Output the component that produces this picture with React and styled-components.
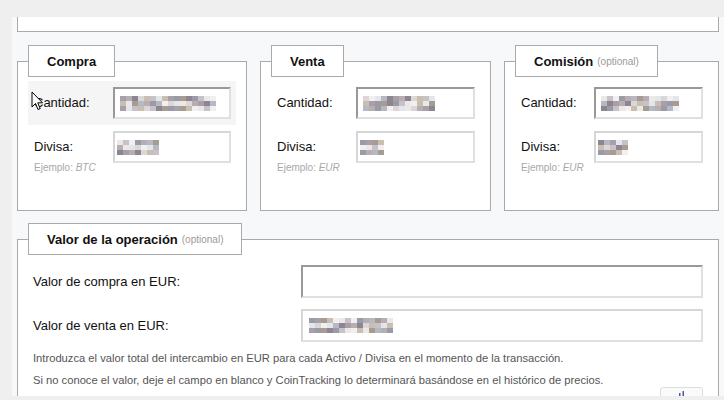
import styled, { createGlobalStyle } from 'styled-components'

const GlobalStyle = createGlobalStyle`
    body {
        margin: 0;
        background: #efefef;
        font-family: "Liberation Sans", Arial, sans-serif;
        color: #111;
    }
`

const Panel = styled.div`
    position: relative;
    margin: 17px 0 0 12px;
    height: 379px;
    overflow: hidden;
    background: #f7f8fa;
    padding: 0 5px;
`

const TopBox = styled.div`
    height: 14px;
    background: #fff;
    border: 1px solid #aaa;
    border-top: none;
`

const Columns = styled.div`
    display: grid;
    grid-template-columns: 230px 231px 1fr;
    column-gap: 13px;
    margin-top: 29px;
`

const Fieldset = styled.div`
    box-sizing: border-box;
    height: ${p => p.$height || 'auto'};
    background: #fff;
    border: 1px solid #aaa;
    border-bottom: ${p => (p.$open ? 'none' : '1px solid #aaa')};
    margin-top: ${p => p.$top || '0'};
`

const Legend = styled.div`
    box-sizing: border-box;
    display: flex;
    align-items: center;
    width: fit-content;
    height: 32px;
    margin: -17px 0 0 10px;
    padding: 0 18px;
    background: #fff;
    border: 1px solid #aaa;
    font-size: 13px;
    font-weight: bold;
    white-space: nowrap;
`

const Optional = styled.span`
    margin-left: 4px;
    font-size: 10px;
    font-weight: normal;
    color: #9a9a9a;
`

const Row = styled.div`
    display: grid;
    grid-template-columns: 40% 1fr;
    margin: ${p => (p.$first ? '4px' : '0')} 10px 0;
    padding: 6px 5px 6px 6px;
    background: ${p => (p.$hover ? '#f5f5f5' : 'transparent')};
`

const LabelCell = styled.div`
    display: flex;
    flex-direction: column;
`

const Label = styled.span`
    font-size: 13px;
    line-height: 32px;
`

const Hint = styled.span`
    margin-top: -2px;
    font-size: 10px;
    line-height: 14px;
    color: #a8a8a8;
    em {
        font-style: italic;
    }
`

const Input = styled.div`
    box-sizing: border-box;
    display: flex;
    align-items: center;
    height: ${p => p.$h || '32px'};
    padding-left: ${p => p.$pad || '5px'};
    background: #fff;
    border-style: solid;
    border-width: 2px;
    border-color: ${p => (p.$soft ? '#d6d6d6' : '#999')} #e0e0e0 #e0e0e0 ${p => (p.$soft ? '#d6d6d6' : '#999')};
    overflow: hidden;
`

const Mosaic = styled.div`
    display: grid;
    grid-template-columns: repeat(${p => p.$cols}, 6px);
    grid-auto-rows: 5px;
`

const Cell = styled.span`
    background: ${p => p.$c};
`

const Wide = styled.div`
    padding: 10px 15px 0 15px;
`

const WideRow = styled.div`
    display: grid;
    grid-template-columns: 268px 1fr;
    align-items: center;
    margin-bottom: 11px;
`

const Help = styled.p`
    margin: -6px 0 0;
    font-size: 11.2px;
    line-height: 22px;
    color: #555;
`

const Actions = styled.div`
    display: flex;
    justify-content: flex-end;
    margin-top: -4px;
`

const SmallButton = styled.div`
    width: 43px;
    height: 20px;
    border: 1px solid #ddd;
    border-radius: 3px;
    background: #fafafa;
    display: flex;
    justify-content: center;
    padding-top: 3px;
    box-sizing: border-box;
`

const Cursor = styled.svg`
    position: absolute;
    left: 19px;
    top: 74px;
    width: 13px;
    height: 20px;
`

const palette = ['#c9c1c8', '#a8a0a8', '#dcd6d6', '#b4b9c4', '#ece8e8', '#9b9aa7', '#c8bfb1', '#8d8590', '#e3e6ea', '#b7aeb4', '#f1efef', '#a69c92']

function Blur({ cols, rows = 3, seed = 1 }) {
    const cells = []
    for (let i = 0; i < cols * rows; i++) {
        const k = (i * 7 + seed * 13 + ((i * i) % 5)) % palette.length
        cells.push(<Cell key={i} $c={palette[k]} />)
    }
    return <Mosaic $cols={cols}>{cells}</Mosaic>
}

function Box({ title, optional, first, cols, divCols, example, seed }) {
    return (
        <Fieldset $height="150px">
            <Legend>
                {title}
                {optional && <Optional>(optional)</Optional>}
            </Legend>
            <Row $first $hover={first}>
                <LabelCell><Label>Cantidad:</Label></LabelCell>
                <Input><Blur cols={cols} seed={seed} /></Input>
            </Row>
            <Row>
                <LabelCell>
                    <Label>Divisa:</Label>
                    <Hint>Ejemplo: <em>{example}</em></Hint>
                </LabelCell>
                <Input $soft $pad="2px"><Blur cols={divCols} rows={3} seed={seed + 3} /></Input>
            </Row>
        </Fieldset>
    )
}

export default function App() {
    return (
        <>
            <GlobalStyle />
            <Panel>
                <TopBox />
                <Columns>
                    <Box title="Compra" first cols={16} divCols={7} example="BTC" seed={1} />
                    <Box title="Venta" cols={12} divCols={4} example="EUR" seed={2} />
                    <Box title="Comisión" optional cols={13} divCols={5} example="EUR" seed={4} />
                </Columns>
                <Fieldset $top="28px" $open>
                    <Legend>
                        Valor de la operación
                        <Optional>(optional)</Optional>
                    </Legend>
                    <Wide>
                        <WideRow>
                            <Label>Valor de compra en EUR:</Label>
                            <Input $h="33px" />
                        </WideRow>
                        <WideRow>
                            <Label>Valor de venta en EUR:</Label>
                            <Input $h="33px" $soft $pad="6px"><Blur cols={14} rows={3} seed={5} /></Input>
                        </WideRow>
                        <Help>
                            Introduzca el valor total del intercambio en EUR para cada Activo / Divisa en el momento de la transacción.
                            <br />
                            Si no conoce el valor, deje el campo en blanco y CoinTracking lo determinará basándose en el histórico de precios.
                        </Help>
                        <Actions>
                            <SmallButton>
                                <svg width="6" height="8" viewBox="0 0 6 8">
                                    <rect x="0" y="2" width="1.5" height="6" fill="#4a5a9a" />
                                    <rect x="3.5" y="0" width="1.5" height="8" fill="#4a5a9a" />
                                </svg>
                            </SmallButton>
                        </Actions>
                    </Wide>
                </Fieldset>
                <Cursor viewBox="0 0 13 20">
                    <path d="M1 1 L1 16 L4.5 12.5 L7 18.5 L9.2 17.6 L6.8 11.8 L11.5 11.8 Z" fill="#fff" stroke="#000" strokeWidth="1" strokeLinejoin="round" />
                </Cursor>
            </Panel>
        </>
    )
}
